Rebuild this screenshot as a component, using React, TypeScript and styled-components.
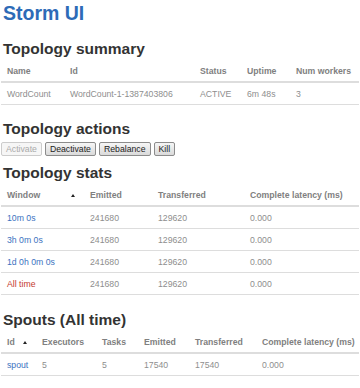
import React from 'react';
import styled, { createGlobalStyle } from 'styled-components';

const GlobalStyle = createGlobalStyle`
  body {
    margin: 0;
    background: #fff;
    font-family: "Liberation Sans", Arial, sans-serif;
  }
`;

const Page = styled.div`
  padding: 0 1px;
`;

const Title = styled.h1`
  margin: 1px 0 0 2px;
  font-size: 19.5px;
  line-height: 24px;
  font-weight: bold;
  color: #2d6bb7;
`;

const Heading = styled.h2<{ $top?: number }>`
  margin: ${(p) => p.$top ?? 15}px 0 0 2px;
  font-size: 15.5px;
  line-height: 18px;
  font-weight: bold;
  color: #333;
`;

const Table = styled.table`
  margin-top: 3px;
  width: 100%;
  table-layout: fixed;
  border-collapse: collapse;
  font-size: 8.7px;
  line-height: 13px;
`;

// widths are the outer column widths, padding included
const Th = styled.th<{ $w?: number; $sorted?: boolean }>`
  position: relative;
  width: ${(p) => (p.$w ? `${p.$w - 12}px` : 'auto')};
  padding: 4px 6px 3px;
  text-align: left;
  font-weight: bold;
  color: #808080;
  border-bottom: 2px solid #ddd;
  white-space: nowrap;

  &::after {
    content: '';
    display: ${(p) => (p.$sorted ? 'block' : 'none')};
    position: absolute;
    right: 9px;
    top: 50%;
    margin-top: -1px;
    border-left: 2.5px solid transparent;
    border-right: 2.5px solid transparent;
    border-bottom: 3px solid #222;
  }
`;

const Td = styled.td`
  padding: 5px 6px 3px;
  color: #8e8e8e;
  border-bottom: 1px solid #ddd;
  white-space: nowrap;
`;

const WindowLink = styled.a<{ $all?: boolean }>`
  color: ${(p) => (p.$all ? '#c43a30' : '#3b72c0')};
  text-decoration: none;
`;

const Actions = styled.div`
  display: flex;
  gap: 3px;
  margin-top: 4px;
`;

const Button = styled.button`
  height: 14px;
  padding: 0 4px;
  font-family: "Liberation Sans", Arial, sans-serif;
  font-size: 8.7px;
  line-height: 12px;
  color: #222;
  background: linear-gradient(#f6f6f6, #dadada);
  border: 1px solid #8c8c8c;
  border-radius: 2px;

  &:disabled {
    color: #aaa;
    background: #f6f6f6;
    border-color: #ccc;
  }
`;

const stats = [
  { window: '10m 0s', emitted: '241680', transferred: '129620', latency: '0.000' },
  { window: '3h 0m 0s', emitted: '241680', transferred: '129620', latency: '0.000' },
  { window: '1d 0h 0m 0s', emitted: '241680', transferred: '129620', latency: '0.000' },
  { window: 'All time', emitted: '241680', transferred: '129620', latency: '0.000', all: true },
];

const App = () => {
  return (
    <Page>
      <GlobalStyle />
      <Title>Storm UI</Title>

      <Heading>Topology summary</Heading>
      <Table>
        <thead>
          <tr>
            <Th $w={63}>Name</Th>
            <Th $w={130}>Id</Th>
            <Th $w={47}>Status</Th>
            <Th $w={49}>Uptime</Th>
            <Th>Num workers</Th>
          </tr>
        </thead>
        <tbody>
          <tr>
            <Td>WordCount</Td>
            <Td>WordCount-1-1387403806</Td>
            <Td>ACTIVE</Td>
            <Td>6m 48s</Td>
            <Td>3</Td>
          </tr>
        </tbody>
      </Table>

      <Heading>Topology actions</Heading>
      <Actions>
        <Button disabled>Activate</Button>
        <Button>Deactivate</Button>
        <Button>Rebalance</Button>
        <Button>Kill</Button>
      </Actions>

      <Heading $top={8}>Topology stats</Heading>
      <Table>
        <thead>
          <tr>
            <Th $w={83} $sorted>Window</Th>
            <Th $w={68}>Emitted</Th>
            <Th $w={92}>Transferred</Th>
            <Th>Complete latency (ms)</Th>
          </tr>
        </thead>
        <tbody>
          {stats.map((row, index) => (
            <tr key={index}>
              <Td>
                <WindowLink href="#" $all={row.all}>{row.window}</WindowLink>
              </Td>
              <Td>{row.emitted}</Td>
              <Td>{row.transferred}</Td>
              <Td>{row.latency}</Td>
            </tr>
          ))}
        </tbody>
      </Table>

      <Heading $top={16}>Spouts (All time)</Heading>
      <Table>
        <thead>
          <tr>
            <Th $w={35} $sorted>Id</Th>
            <Th $w={60}>Executors</Th>
            <Th $w={42}>Tasks</Th>
            <Th $w={51}>Emitted</Th>
            <Th $w={67}>Transferred</Th>
            <Th>Complete latency (ms)</Th>
          </tr>
        </thead>
        <tbody>
          <tr>
            <Td>
              <WindowLink href="#">spout</WindowLink>
            </Td>
            <Td>5</Td>
            <Td>5</Td>
            <Td>17540</Td>
            <Td>17540</Td>
            <Td>0.000</Td>
          </tr>
        </tbody>
      </Table>
    </Page>
  );
};

export default App;
